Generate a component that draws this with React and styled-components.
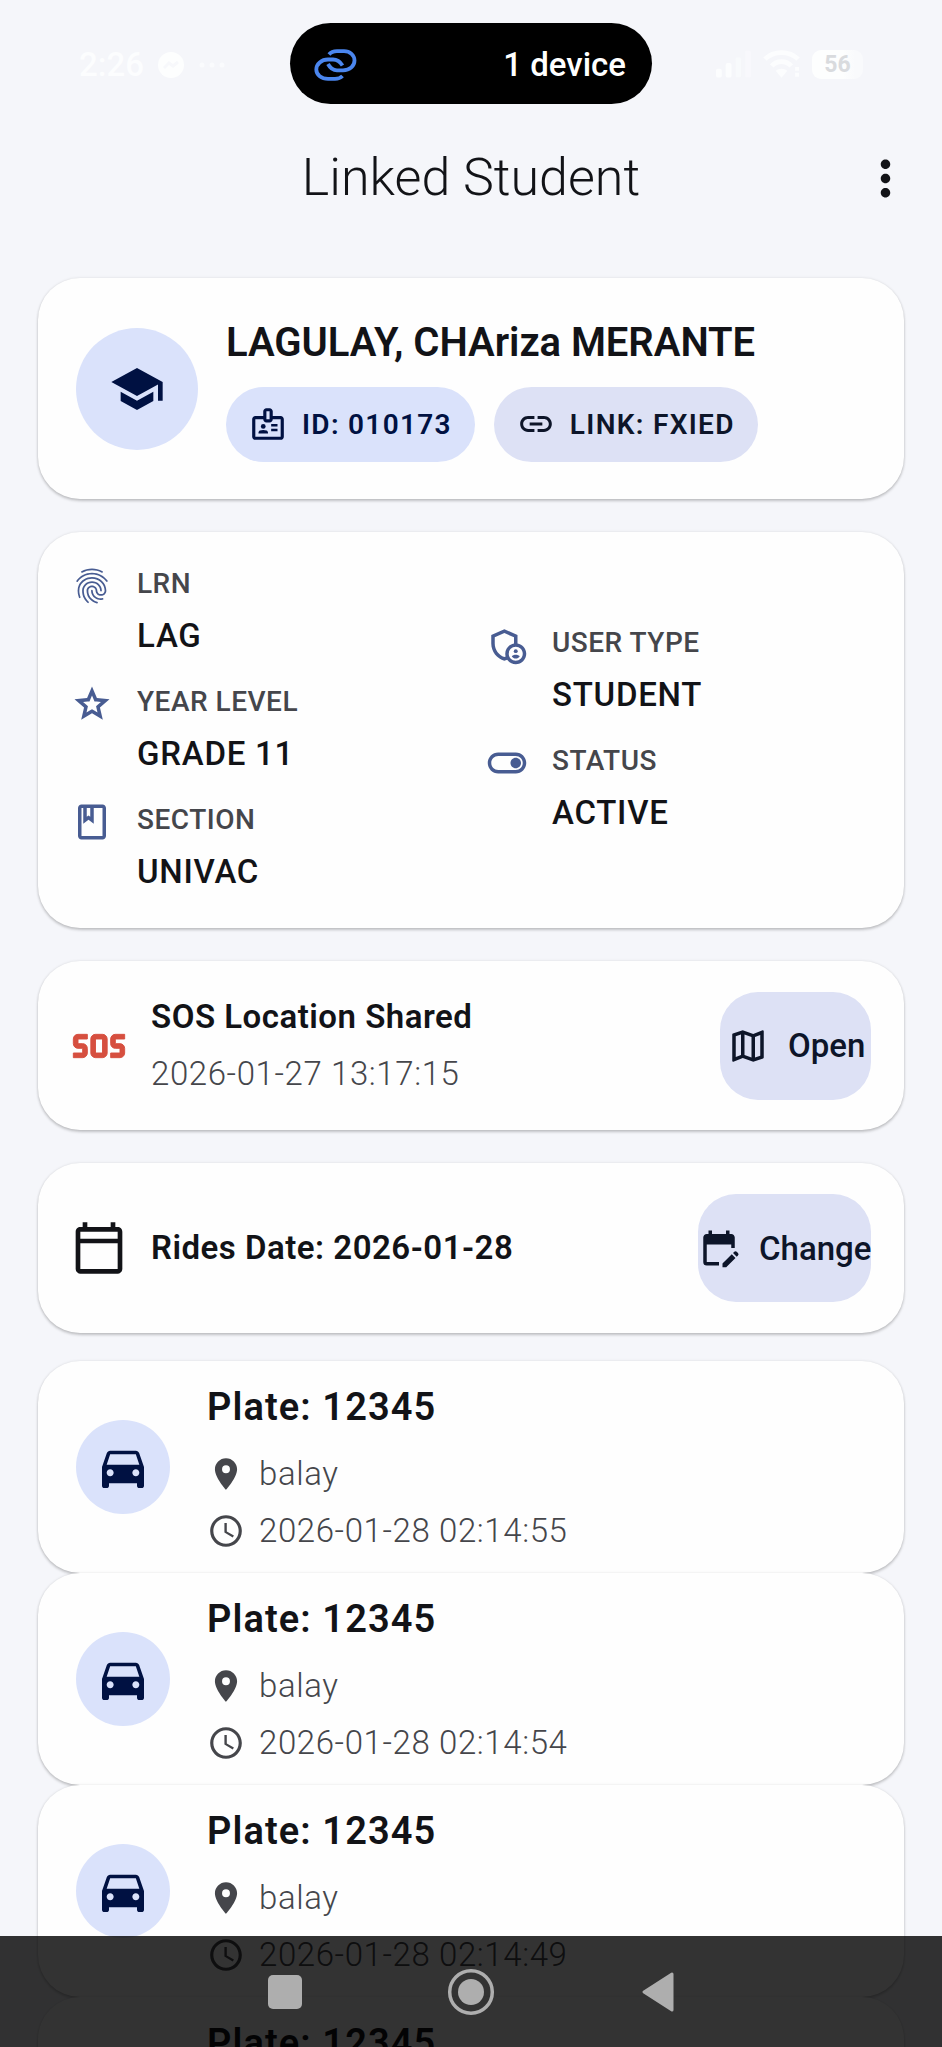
import React from 'react'
import styled, { createGlobalStyle } from 'styled-components'
import {
  MdMoreVert, MdSchool, MdOutlineBadge, MdLink, MdFingerprint, MdOutlineGrade,
  MdOutlineClass, MdOutlineAdminPanelSettings, MdOutlineToggleOn, MdSos,
  MdOutlineCalendarToday, MdOutlineMap, MdEditCalendar, MdDirectionsCar,
  MdLocationOn, MdAccessTime,
} from 'react-icons/md'

const GlobalStyle = createGlobalStyle`
  * {
    box-sizing: border-box;
  }
  body {
    margin: 0;
    background: #f5f6fa;
    font-family: Roboto, sans-serif;
    color: #121317;
  }
  svg {
    display: block;
    flex-shrink: 0;
  }
`
const Screen = styled.div`
  position: relative;
  display: flex;
  flex-direction: column;
  width: 942px;
  height: 2047px;
  overflow: hidden;
  background: #f5f6fa;
`
const StatusBar = styled.div`
  display: grid;
  grid-template-columns: 290px 362px 290px;
  flex-shrink: 0;
  align-items: center;
  height: 80px;
  margin-top: 23px;
  color: #fcfdfe;
`
const StatusLeft = styled.div`
  display: flex;
  align-items: center;
  gap: 14px;
  padding: 2px 0 0 79px;
  font-size: 33px;
  font-weight: 500;
`
const StatusRight = styled.div`
  display: flex;
  align-items: center;
  gap: 12px;
  padding: 1px 0 0 63px;
`
const Battery = styled.div`
  display: flex;
  align-items: center;
  justify-content: center;
  width: 51px;
  height: 29px;
  border-radius: 9px;
  background: linear-gradient(90deg, #fdfefe 60%, #f9fafc 85%);
  color: #d9dbde;
  font-size: 23px;
  font-weight: 700;
`
const Island = styled.div`
  display: flex;
  align-items: center;
  justify-content: space-between;
  height: 81px;
  padding: 2px 26px 0 24px;
  border-radius: 41px;
  background: #000;
  color: #fff;
  font-size: 33px;
  font-weight: 500;
`
const Header = styled.header`
  display: grid;
  grid-template-columns: 113px 1fr 113px;
  flex-shrink: 0;
  align-items: center;
  height: 150px;
`
const Title = styled.h1`
  grid-column: 2;
  margin: 0 0 2px;
  text-align: center;
  font-size: 52px;
  font-weight: 300;
`
const MenuButton = styled.div`
  display: flex;
  justify-content: center;
`
const Content = styled.main`
  display: flex;
  flex-direction: column;
  padding: 25px 38px 0;
`
const Card = styled.section`
  display: flex;
  flex-shrink: 0;
  align-items: center;
  height: ${({ $height }) => $height}px;
  margin-bottom: ${({ $gap }) => $gap}px;
  padding: 0 33px 0 ${({ $left }) => $left || 38}px;
  border-radius: 42px;
  background: #fefefe;
  box-shadow: 0 2px 3px rgba(0, 0, 0, 0.2), 0 0 3px rgba(0, 0, 0, 0.1);
`
const Circle = styled.div`
  display: flex;
  align-items: center;
  justify-content: center;
  flex-shrink: 0;
  width: ${({ $size }) => $size}px;
  height: ${({ $size }) => $size}px;
  border-radius: 50%;
  background: #dae2fb;
  color: #001142;
`
const Profile = styled.div`
  display: flex;
  flex-direction: column;
  gap: 18px;
  margin-left: 28px;
`
const Name = styled.h2`
  margin: 0;
  font-size: 40px;
  line-height: 53px;
  font-weight: 600;
  letter-spacing: -0.05px;
  white-space: nowrap;
`
const Chips = styled.div`
  display: flex;
  gap: 19px;
`
const Chip = styled.div`
  display: flex;
  align-items: center;
  gap: 15px;
  height: 75px;
  padding: 0 23px;
  border-radius: 38px;
  background: ${({ $primary }) => ($primary ? '#dae2fb' : '#dde1f5')};
  color: ${({ $primary }) => ($primary ? '#001142' : '#0d1529')};
  font-size: 28px;
  font-weight: 600;
  letter-spacing: 1.3px;
  white-space: nowrap;
`
const InfoColumn = styled.div`
  display: flex;
  flex-direction: column;
  gap: 19px;
  width: ${({ $width }) => $width}px;
`
const InfoRow = styled.div`
  display: flex;
  height: 99px;
  gap: 24px;
  color: #485c92;

  svg {
    margin-top: 2px;
  }
`
const InfoLabel = styled.div`
  margin-top: 2px;
  color: #45464b;
  font-size: 28px;
  line-height: 37px;
  font-weight: 500;
  letter-spacing: 0.5px;
`
const InfoValue = styled.div`
  margin-top: 10px;
  color: #121317;
  font-size: 33px;
  line-height: 47px;
  font-weight: 500;
  letter-spacing: 0.75px;
`
const SosIcon = styled(MdSos)`
  color: #d64f3f;

  path:not([fill='none']) {
    stroke: currentColor;
    stroke-width: 0.4px;
  }
`
const CardText = styled.div`
  flex: 1;
  margin-left: 24px;
`
const CardTitle = styled.div`
  font-size: 33px;
  line-height: 56px;
  font-weight: 600;
  letter-spacing: 0.5px;
  white-space: nowrap;
`
const Muted = styled.div`
  color: #45464b;
  font-size: 33px;
  line-height: 57px;
  font-weight: 300;
  letter-spacing: 0.6px;
`
const Button = styled.div`
  display: flex;
  align-items: center;
  gap: 19px;
  width: ${({ $width }) => $width}px;
  height: 108px;
  padding-left: ${({ $left }) => $left}px;
  border-radius: 38px;
  background: #dde1f5;
  color: #0d1529;
  font-size: 33px;
  font-weight: 500;
  white-space: nowrap;
`
const Ride = styled.div`
  display: flex;
  flex-direction: column;
  margin-left: 37px;
`
const Plate = styled.div`
  margin: 4px 0 9px;
  font-size: 38px;
  line-height: 57px;
  font-weight: 600;
  letter-spacing: 1.1px;
`
const RideRow = styled.div`
  display: flex;
  align-items: center;
  gap: 14px;
  color: #45464b;
`
const NavBar = styled.nav`
  position: absolute;
  left: 0;
  right: 0;
  bottom: 0;
  display: flex;
  align-items: center;
  justify-content: center;
  gap: 145.5px;
  height: 111px;
  background: rgba(0, 0, 0, 0.8);
`

const rides = [
  '2026-01-28 02:14:55',
  '2026-01-28 02:14:54',
  '2026-01-28 02:14:49',
  '2026-01-28 02:14:48',
]

const LinkedRings = () => (
  <svg width="44" height="34" viewBox="0 0 44 34" fill="none" stroke="#4b86ee" strokeWidth="3.8">
    <path d="M15 6.5C17 4 20 3.2 23 3.2h7c6 0 10.5 4 10.5 9.3S36 22.3 29 22.3h-6c-4 0-7-2.5-9-6.3" />
    <path d="M28.5 28c-2 2-4.5 2.8-7.5 2.8h-7C7.5 30.8 2.3 27 2.3 21.500S7.5 11.5 14 11.5h5c4.500 0 7 2 9.5 6" />
  </svg>
)

const Info = ({ icon, label, value }) => (
  <InfoRow>
    {icon}
    <div>
      <InfoLabel>{label}</InfoLabel>
      <InfoValue>{value}</InfoValue>
    </div>
  </InfoRow>
)

const App = () => {
  return (
    <Screen>
      <GlobalStyle />
      <StatusBar>
        <StatusLeft>
          2:26
          <svg width="26" height="26" viewBox="0 0 26 26">
            <circle cx="13" cy="13" r="13" fill="#fdfefe" />
            <path d="M6 16l5-5 4 3 5-4" fill="none" stroke="#f7f8fb" strokeWidth="3" />
          </svg>
          <svg width="28" height="6" viewBox="0 0 28 6" fill="#fafbfd">
            <circle cx="4" cy="3" r="2.5" />
            <circle cx="14" cy="3" r="2.5" />
            <circle cx="24" cy="3" r="2.5" />
          </svg>
        </StatusLeft>
        <Island>
          <LinkedRings />
          <span>1 device</span>
        </Island>
        <StatusRight>
          <svg width="36" height="28" viewBox="0 0 37 28" fill="#fcfdfe">
            <rect x="1" y="19" width="6" height="9" rx="2" />
            <rect x="11" y="13" width="6" height="15" rx="2" />
            <rect x="21" y="7" width="6" height="21" rx="2" opacity="0.5" />
            <rect x="31" y="0" width="6" height="28" rx="2" opacity="0.4" />
          </svg>
          <svg width="37" height="28" viewBox="0 0 38 28" fill="none" stroke="#fcfdfe" strokeWidth="5">
            <path d="M2 9C11 0 27 0 36 9" />
            <path d="M9 16C14 10 24 10 29 16" />
            <path d="M19 28l-6-7c3-3 9-3 12 0z" fill="#fcfdfe" stroke="none" />
            <path d="M35 17v11" strokeWidth="4" strokeDasharray="4 2" />
          </svg>
          <Battery>56</Battery>
        </StatusRight>
      </StatusBar>

      <Header>
        <Title>Linked Student</Title>
        <MenuButton>
          <MdMoreVert size={57} />
        </MenuButton>
      </Header>

      <Content>
        <Card $height={221} $gap={33}>
          <Circle $size={122}>
            <MdSchool size={56} />
          </Circle>
          <Profile>
            <Name>LAGULAY, CHAriza MERANTE</Name>
            <Chips>
              <Chip $primary>
                <MdOutlineBadge size={38} />
                ID: 010173
              </Chip>
              <Chip>
                <MdLink size={38} />
                LINK: FXIED
              </Chip>
            </Chips>
          </Profile>
        </Card>

        <Card $height={396} $gap={33} $left={33}>
          <InfoColumn $width={415}>
            <Info icon={<MdFingerprint size={42} />} label="LRN" value="LAG" />
            <Info icon={<MdOutlineGrade size={42} />} label="YEAR LEVEL" value="GRADE 11" />
            <Info icon={<MdOutlineClass size={42} />} label="SECTION" value="UNIVAC" />
          </InfoColumn>
          <InfoColumn>
            <Info icon={<MdOutlineAdminPanelSettings size={42} />} label="USER TYPE" value="STUDENT" />
            <Info icon={<MdOutlineToggleOn size={42} />} label="STATUS" value="ACTIVE" />
          </InfoColumn>
        </Card>

        <Card $height={169} $gap={33} $left={33}>
          <SosIcon size={56} />
          <CardText>
            <CardTitle>SOS Location Shared</CardTitle>
            <Muted>2026-01-27 13:17:15</Muted>
          </CardText>
          <Button $width={151} $left={7}>
            <MdOutlineMap size={42} />
            Open
          </Button>
        </Card>

        <Card $height={170} $gap={28} $left={33}>
          <MdOutlineCalendarToday size={56} />
          <CardText>
            <CardTitle>Rides Date: 2026-01-28</CardTitle>
          </CardText>
          <Button $width={173} $left={0}>
            <MdEditCalendar size={42} />
            Change
          </Button>
        </Card>

        {rides.map((time) => (
          <Card key={time} $height={212} $gap={0}>
            <Circle $size={94}>
              <MdDirectionsCar size={56} />
            </Circle>
            <Ride>
              <Plate>Plate: 12345</Plate>
              <RideRow>
                <MdLocationOn size={38} />
                <Muted>balay</Muted>
              </RideRow>
              <RideRow>
                <MdAccessTime size={38} />
                <Muted>{time}</Muted>
              </RideRow>
            </Ride>
          </Card>
        ))}
      </Content>

      <NavBar>
        <svg width="34" height="34" viewBox="0 0 34 34">
          <rect width="34" height="34" rx="5" fill="#aeaeae" />
        </svg>
        <svg width="48" height="48" viewBox="0 0 48 48">
          <circle cx="24" cy="24" r="21.3" fill="none" stroke="#aeaeae" strokeWidth="3.5" />
          <circle cx="24" cy="24" r="13" fill="#aeaeae" />
        </svg>
        <svg width="34" height="40" viewBox="0 0 34 40">
          <path d="M31 2v36L3 20z" fill="#aeaeae" stroke="#aeaeae" strokeWidth="3" strokeLinejoin="round" />
        </svg>
      </NavBar>
    </Screen>
  )
}

export default App
